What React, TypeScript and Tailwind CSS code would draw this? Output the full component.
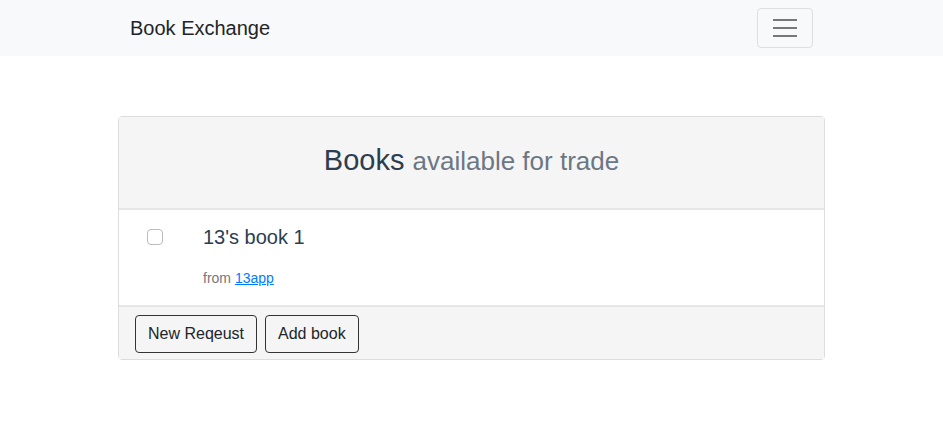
import React from "react";

export default function App() {
  return (
    <div className="min-h-[436px] bg-white font-['Liberation_Sans',Arial,sans-serif] text-[#212529]">
      <nav className="h-14 bg-[#f8f9fa]">
        <div className="w-[683px] mx-auto h-full flex items-center justify-between">
          <a className="text-xl text-[#212529]">Book Exchange</a>
          <button className="w-14 h-10 rounded border border-[rgba(0,0,0,0.1)] flex flex-col items-center justify-center gap-[6px]">
            <span className="block w-6 h-[2px] bg-[#777]" />
            <span className="block w-6 h-[2px] bg-[#777]" />
            <span className="block w-6 h-[2px] bg-[#777]" />
          </button>
        </div>
      </nav>

      <div className="w-[707px] mx-auto mt-[60px] border border-[#ddd] rounded">
        <div className="h-[93px] pb-1 bg-[#f5f5f5] border-b-2 border-[#e6e6e6] flex items-center justify-center">
          <h3 className="text-[29px] text-[#2c3e50]">
            Books <small className="text-[26px] text-[#6c7784]">available for trade</small>
          </h3>
        </div>

        <div className="flex pl-[28px] pt-[15px] pb-4 border-b-2 border-[#e6e6e6]">
          <div className="h-6 flex items-center">
            <span className="block w-4 h-4 rounded border border-[#bbb] bg-white" />
          </div>
          <div className="ml-10">
            <div className="text-xl leading-6 text-[#2c3e50]">13's book 1</div>
            <div className="mt-[19px] text-sm leading-[21px] text-[#777]">
              from <a href="#" className="text-[#007bff] underline">13app</a>
            </div>
          </div>
        </div>

        <div className="bg-[#f5f5f5] px-4 pt-[8px] pb-[6px] flex gap-2">
          <button className="px-3 h-[38px] rounded border border-[#333] text-base text-[#212529]">New Reqeust</button>
          <button className="px-3 h-[38px] rounded border border-[#333] text-base text-[#212529]">Add book</button>
        </div>
      </div>
    </div>
  );
}
